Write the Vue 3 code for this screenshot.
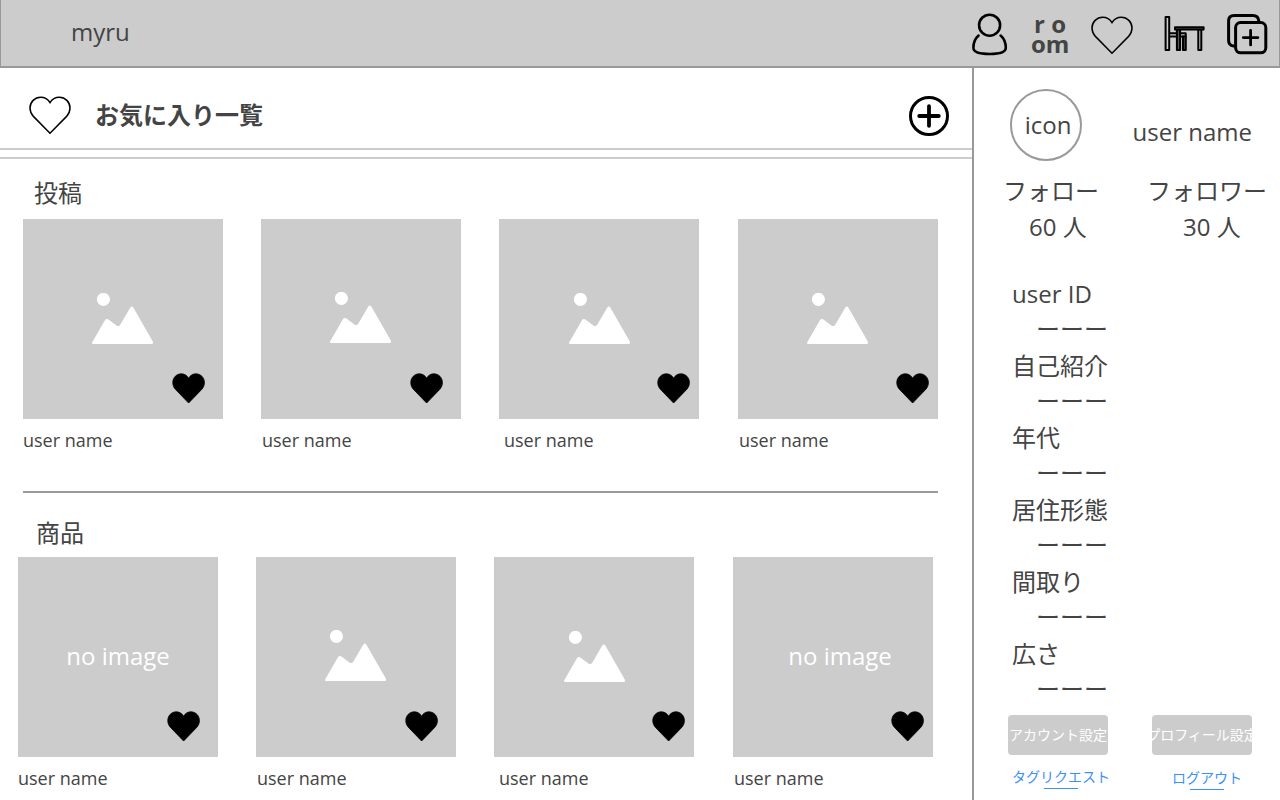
<script setup>
const sections = [
  { title: '投稿', key: 'posts', cards: ['image', 'image', 'image', 'image'] },
  { title: '商品', key: 'items', cards: ['none', 'image', 'image', 'none'] },
]
const profile = ['user ID', '自己紹介', '年代', '居住形態', '間取り', '広さ']
const heart =
  'M21 37.2 L4.4 20.4 C2.2 18 1 15.2 1 12.1 C1 6 5.8 1.2 11.6 1.2 C15.8 1.2 19 3.2 21 6.6 C23 3.2 26.2 1.2 30.4 1.2 C36.2 1.2 41 6 41 12.1 C41 15.2 39.8 18 37.6 20.4 Z'
</script>

<template>
  <div class="page">
    <header class="topbar">
      <span class="brand">myru</span>
      <nav class="nav">
        <svg class="user" width="36" height="43" viewBox="0 0 36 43" fill="none" stroke="#000" stroke-width="2.6" stroke-linecap="round">
          <circle cx="17.6" cy="12.2" r="10.5" />
          <path d="M6.6 22.6C3.2 25.5 1.4 30 1.4 34.8C1.4 38.8 7.5 41 17.6 41C27.7 41 33.8 38.8 33.8 34.8C33.8 30 32 25.5 28.6 22.6" />
        </svg>
        <span class="room">r o<br />om</span>
        <svg class="fav" width="42" height="39" viewBox="0 0 42 39" fill="none" stroke="#000" stroke-width="1.5"><path :d="heart" /></svg>
        <svg class="desk" width="41" height="37" viewBox="0 0 41 37" fill="none" stroke="#000" stroke-width="2" stroke-linejoin="round">
          <path d="M1.6 1.9h3.6v33h-3.6z" />
          <path d="M5.2 18.2h16.5v3.3H5.2" />
          <path fill="#444" d="M19 21.5h2.8v13.4h-2.8z" />
          <path fill="#555" d="M12.9 14.5h3.2v20.4h-3.2z" />
          <path d="M34.3 14.5h3v20.4h-3z" />
          <path fill="#999" d="M11 12.2h28.6v2.3H11z" />
        </svg>
        <svg class="copy" width="41" height="41" viewBox="0 0 41 41" fill="none" stroke="#000" stroke-width="3" stroke-linecap="round">
          <path d="M6.6 32.1C3.4 31.6 1.6 29.6 1.6 26.5V7C1.6 3.6 3.8 1.6 7.2 1.6H26C29.2 1.6 31.2 3.2 31.7 6.6" />
          <rect x="8.6" y="8.6" width="30.2" height="30.2" rx="5" />
          <path stroke-width="2.8" d="M23.6 16.3v14.6M16.3 23.6h14.6" />
        </svg>
      </nav>
    </header>

    <div class="body">
      <main class="main">
        <div class="title">
          <svg width="42" height="39" viewBox="0 0 42 39" fill="none" stroke="#000" stroke-width="1.5"><path :d="heart" /></svg>
          <h1>お気に入り一覧</h1>
          <svg class="add" width="40" height="40" viewBox="0 0 40 40" fill="none" stroke="#000" stroke-linecap="round">
            <circle cx="20" cy="20" r="18.5" stroke-width="3" />
            <path stroke-width="3.8" d="M20 10.2v19.6M10.2 20h19.6" />
          </svg>
        </div>
        <div class="stripe"></div>

        <section v-for="s in sections" :key="s.key" :class="['section', s.key]">
          <h2>{{ s.title }}</h2>
          <div class="cards">
            <article v-for="(c, i) in s.cards" :key="i" class="card">
              <div class="thumb">
                <svg v-if="c === 'image'" class="picture" width="62" height="52" viewBox="0 0 62 52" fill="#fff">
                  <circle cx="11.4" cy="6.4" r="6.5" />
                  <path d="M.1 49.5L12.8 27.4Q14.2 25.2 16.4 26.6L24.4 32.4Q26.8 34.1 28.4 31.5L38.3 14.4Q39.8 12.5 41.3 14.4L60.8 48.6Q61.7 51 59.5 51H1.3Q-.4 51 .1 49.5Z" />
                </svg>
                <span v-else class="noimage">no image</span>
                <svg class="like" width="34" height="31" viewBox="0 0.2 43 38.2" preserveAspectRatio="none"><path :d="heart" stroke="#000" /></svg>
              </div>
              <p>user name</p>
            </article>
          </div>
        </section>
      </main>

      <aside class="side">
        <div class="who">
          <div class="avatar">icon</div>
          <span>user name</span>
        </div>
        <div class="stats">
          <div class="stat"><span>フォロー</span><span>60 人</span></div>
          <div class="stat"><span>フォロワー</span><span>30 人</span></div>
        </div>
        <dl class="profile">
          <template v-for="p in profile" :key="p">
            <dt>{{ p }}</dt>
            <dd>ーーー</dd>
          </template>
        </dl>
        <div class="buttons">
          <button><span>アカウント設定</span></button>
          <button><span>プロフィール設定</span></button>
        </div>
        <div class="links">
          <a class="tag">タグリクエスト</a>
          <a class="logout">ログアウト</a>
        </div>
      </aside>
    </div>
  </div>
</template>

<style>
body { margin: 0; background: #fff; }
</style>

<style scoped>
.page {
  width: 1280px;
  height: 800px;
  overflow: hidden;
  display: flex;
  flex-direction: column;
  font-family: "Open Sans", "Noto Sans CJK JP", sans-serif;
  font-size: 24px;
  line-height: 36px;
  color: #444;
}
h1, h2, p, dl, dd { margin: 0; font-weight: 400; }
svg { display: block; flex: none; }
.topbar {
  box-sizing: border-box;
  flex: none;
  height: 68px;
  background: #ccc;
  border: solid #999;
  border-width: 0 1px 2px;
  display: flex;
  justify-content: space-between;
  padding-left: 70px;
}
.brand { padding-top: 14px; }
.nav { display: flex; align-items: flex-start; padding-right: 11px; }
.user { margin: 13px 23px 0 0; }
.room { width: 38px; margin: 14px 22px 0 0; text-align: center; font-weight: 700; line-height: 20px; white-space: nowrap; }
.fav { margin: 16px 31px 0 0; }
.desk { margin: 15px 22px 0 0; }
.copy { margin-top: 14px; }
.body { flex: 1; min-height: 0; display: flex; }
.main { width: 972px; flex: none; }
.title {
  height: 80px;
  display: flex;
  align-items: flex-start;
  border-bottom: 2px solid #ccc;
  padding: 0 23px 0 28.5px;
}
.title > svg { margin-top: 27.5px; }
.title h1 { flex: 1; margin: 29px 0 0 24.5px; font-size: 24px; font-weight: 700; }
.title .add { margin-top: 28px; }
.stripe { height: 7px; border-bottom: 2px solid #ccc; }
.posts { padding: 16px 0 0 23px; }
.posts h2 { padding-left: 11px; margin-bottom: 8px; }
.posts .cards { width: 915px; height: 272px; border-bottom: 2px solid #999; }
.items { padding: 22px 0 0 18px; }
.items h2 { padding-left: 18px; margin-bottom: 6px; }
.section h2 { font-size: 24px; }
.cards { display: grid; grid-template-columns: 238px 238px 239px 200px; }
.thumb {
  position: relative;
  width: 200px;
  height: 200px;
  background: #ccc;
  color: #fff;
  text-align: center;
}
.picture { position: absolute; left: 69px; top: 74px; }
.card:nth-child(2) .picture { top: 73px; }
.card:nth-child(3) .picture { left: 70px; }
.noimage { display: block; padding-top: 81px; }
.card:last-child .noimage { padding-left: 14px; }
.like { position: absolute; left: 149px; top: 154px; }
.card:nth-child(n + 3) .like { left: 158px; }
.card p { font-size: 18px; line-height: 24px; margin-top: 9px; }
.card:nth-child(2n) p { padding-left: 1px; }
.card:nth-child(3) p { padding-left: 5px; }
.side { flex: 1; border-left: 2px solid #999; }
.who { display: flex; padding: 21px 0 0 36px; }
.avatar {
  box-sizing: border-box;
  width: 72px;
  height: 72px;
  border: 2px solid #999;
  border-radius: 50%;
  text-align: center;
  line-height: 67px;
  padding-left: 4px;
}
.who span { margin: 25px 0 0 50.5px; }
.stats { display: flex; padding: 12px 0 0 29px; }
.stat { display: flex; flex-direction: column; width: 144px; white-space: nowrap; }
.stat span:last-child { padding-left: 26px; }
.stat:last-child span:last-child { padding-left: 36px; }
.profile { padding: 31px 0 0 38px; }
.profile dt, .profile dd { height: 36px; }
.profile dd { padding-left: 24px; line-height: 34px; }
.buttons { display: flex; gap: 44px; padding: 7px 0 0 34px; }
.buttons button {
  width: 100px;
  height: 40px;
  border: 0;
  padding: 0;
  border-radius: 4px;
  background: #ccc;
  color: #fff;
  font: 14px/40px "Open Sans", "Noto Sans CJK JP", sans-serif;
  overflow: hidden;
  display: flex;
  justify-content: center;
  white-space: nowrap;
}
.links { display: flex; padding: 11px 0 0 38px; gap: 62px; color: #3b92f2; font-size: 14px; line-height: 21px; }
.links a::after { content: ""; display: block; width: 34px; height: 1px; margin-top: 1px; background: currentColor; }
.links .tag::after { margin-left: 32px; }
.logout { padding-top: 1px; }
.links .logout::after { margin-left: 18px; }
</style>
